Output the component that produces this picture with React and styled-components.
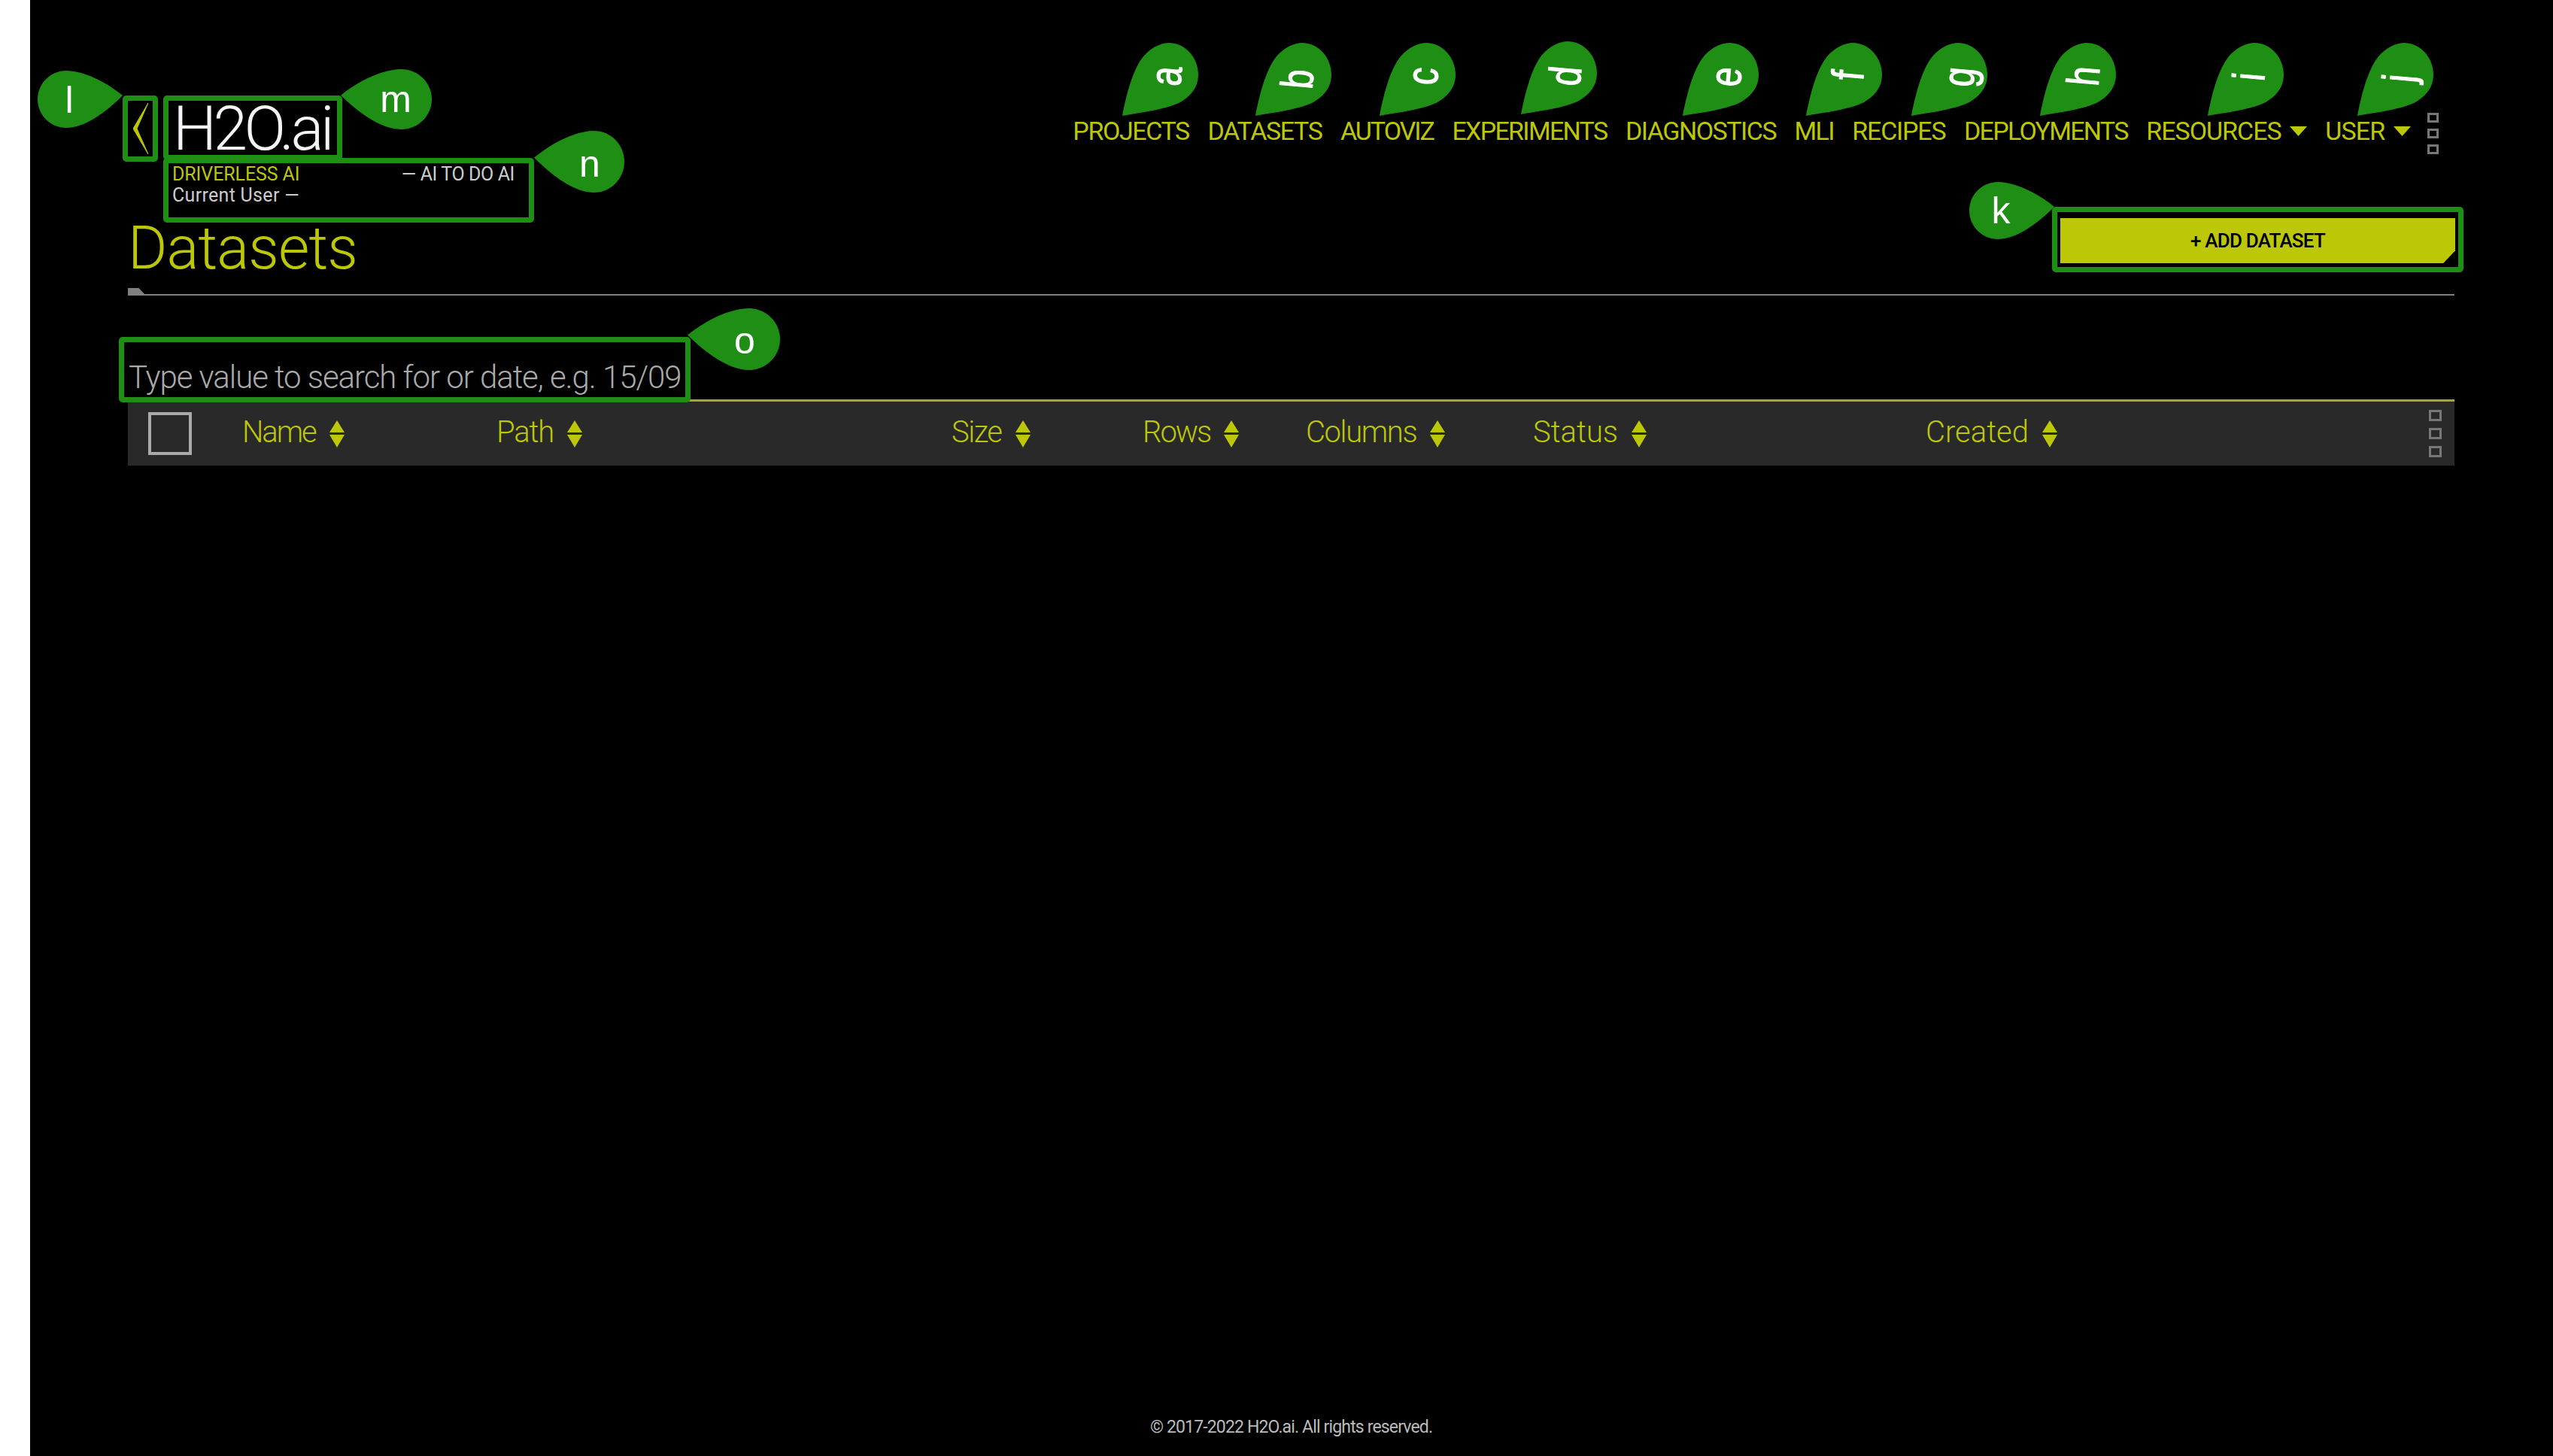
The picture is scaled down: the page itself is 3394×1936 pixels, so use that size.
import React from "react";
import styled, { createGlobalStyle } from "styled-components";

const lime = "#bcc707";
const green = "#1e8e14";
const face = `"Roboto", "Liberation Sans", sans-serif`;

const Global = createGlobalStyle`
  html, body { margin: 0; padding: 0; background: #fff; overflow: hidden; }
  body { font-family: ${face}; }
`;

// - - - - - - - - - - -
// page frame
const Page = styled.div`
  position: relative;
  width: 3394px;
  height: 1936px;
  padding-left: 40px;
  box-sizing: border-box;
  overflow: hidden;
`;

const Main = styled.main`
  display: flex;
  flex-direction: column;
  height: 100%;
  padding: 0 131px 0 130px;
  box-sizing: border-box;
  background: #000;
`;

// - - - - - - - - - - -
// top bar
const TopBar = styled.header`
  display: flex;
  justify-content: space-between;
  align-items: flex-start;
  height: 292px;
  padding-top: 127px;
  box-sizing: border-box;
`;

const Brand = styled.div`
  display: flex;
  gap: 7px;
  margin-left: -7px;
`;

const Marked = styled.div`
  border: 7px solid ${green};
  border-radius: 5px;
  box-sizing: border-box;
`;

const BackBox = styled(Marked)`
  display: flex;
  align-items: center;
  justify-content: center;
  width: 47px;
  height: 88px;
`;

const BrandColumn = styled.div`
  display: flex;
  flex-direction: column;
`;

const LogoBox = styled(Marked)`
  width: 238px;
  height: 86px;
  padding-left: 6px;
  color: #f4f4f4;
  font-size: 82px;
  font-weight: 300;
  line-height: 74px;
  letter-spacing: -4.5px;
  white-space: nowrap;
`;

const TagBox = styled(Marked)`
  width: 493px;
  height: 86px;
  margin-top: -3px;
  padding: 1px 0 0 5px;
  font-size: 25px;
  line-height: 28px;
  color: #ccc;
`;

const TagRow = styled.div`
  display: flex;
  justify-content: space-between;
  padding-right: 19px;
  white-space: nowrap;
  letter-spacing: 0.3px;
`;

const Product = styled.span`
  color: ${lime};
  letter-spacing: -0.1px;
`;

const Motto = styled.span`
  letter-spacing: -0.4px;
`;

const Nav = styled.nav`
  display: flex;
  align-items: flex-start;
  gap: 24.5px;
  margin-top: 23px;
  margin-right: 21px;
`;

const NavItem = styled.a`
  display: flex;
  align-items: center;
  gap: 11px;
  color: ${lime};
  font-size: 34px;
  line-height: 48px;
  white-space: nowrap;
  letter-spacing: ${(p) => p.$track}px;
`;

const NavDots = styled.div`
  margin-left: -2px;
`;

const Dots = styled.div`
  display: flex;
  flex-direction: column;
  gap: ${(p) => (p.$big ? 9 : 8)}px;
`;

const Dot = styled.i`
  display: block;
  width: ${(p) => (p.$big ? 17 : 15)}px;
  height: ${(p) => (p.$big ? 15 : 13)}px;
  border: 3px solid #777;
  box-sizing: border-box;
`;

// - - - - - - - - - - -
// title row
const TitleRow = styled.section`
  position: relative;
  display: flex;
  justify-content: space-between;
  align-items: flex-start;
  height: 118px;
  margin-top: -17px;
  border-bottom: 2px solid #808080;
  box-sizing: border-box;
  &::before {
    content: "";
    position: absolute;
    left: 0;
    bottom: -2px;
    width: 24px;
    height: 10px;
    background: #808080;
    clip-path: polygon(0 0, 60% 0, 100% 100%, 0 100%);
  }
`;

const Title = styled.h1`
  margin: 10px 0 0 0;
  color: ${lime};
  font-size: 80px;
  font-weight: 300;
  line-height: 90px;
  letter-spacing: -0.9px;
  white-space: nowrap;
`;

const ButtonBox = styled(Marked)`
  width: 547px;
  height: 87px;
  margin-right: -12px;
  padding: 8px 4px 5px;
`;

const AddButton = styled.button`
  display: block;
  width: 100%;
  height: 60px;
  padding: 0;
  border: 0;
  background: ${lime};
  color: #000;
  font-family: ${face};
  font-size: 26px;
  font-weight: 500;
  letter-spacing: -0.8px;
  clip-path: polygon(0 0, 100% 0, 100% 72%, 97% 100%, 0 100%);
`;

// - - - - - - - - - - -
// search and table head
const SearchBox = styled(Marked)`
  position: relative;
  z-index: 1;
  display: flex;
  align-items: flex-end;
  width: 760px;
  height: 87px;
  margin: 55px 0 0 -12px;
  padding: 0 0 1px 6px;
  color: #aaa;
  font-size: 42px;
  font-weight: 300;
  line-height: 50px;
  letter-spacing: -1.06px;
  white-space: nowrap;
`;

const TableHead = styled.div`
  display: flex;
  align-items: center;
  height: 88px;
  margin-top: -4px;
  padding-left: 27px;
  padding-right: 17px;
  border-top: 3px solid #a3a92a;
  background: #292929;
  box-sizing: border-box;
`;

const CheckBox = styled.div`
  flex: none;
  width: 58px;
  height: 57px;
  margin-right: 67px;
  border: 4px solid #aaa;
  box-sizing: border-box;
`;

const HeadCell = styled.div`
  display: flex;
  flex: none;
  align-items: center;
  gap: 18px;
  width: ${(p) => p.$width}px;
  padding-bottom: 4px;
  box-sizing: border-box;
  color: ${lime};
  font-size: 40px;
  font-weight: 300;
  line-height: 48px;
  letter-spacing: ${(p) => p.$track}px;
`;

const SortIcon = styled.svg`
  margin-top: 4px;
  fill: ${lime};
`;

const HeadEnd = styled.div`
  margin-left: auto;
`;

const Footer = styled.footer`
  margin-top: auto;
  padding-bottom: 24px;
  color: #bbb;
  font-size: 23px;
  line-height: 28px;
  letter-spacing: -0.85px;
  text-align: center;
`;

// - - - - - - - - - - -
// annotation pins
const PinWrap = styled.div`
  position: absolute;
  left: ${(p) => p.$x}px;
  top: ${(p) => p.$y}px;
  width: ${(p) => p.$w}px;
  height: ${(p) => p.$h}px;
`;

const PinShape = styled.svg`
  display: block;
  width: 100%;
  height: 100%;
  fill: ${green};
`;

const PinLetter = styled.span`
  position: absolute;
  left: ${(p) => p.$cx}px;
  top: ${(p) => p.$cy}px;
  color: #fff;
  font-family: "Liberation Sans", sans-serif;
  font-size: 50px;
  line-height: 50px;
  transform: translate(-50%, -50%) rotate(${(p) => p.$turn || 0}deg) scale(${(p) => p.$stretch || "1, 1"});
  -webkit-text-stroke: ${(p) => (p.$turn ? "1px #fff" : "0")};
`;

const PinTop = ({ x, y, letter, cx, cy }) => (
  <PinWrap $x={x} $y={y} $w={102} $h={98}>
    <PinShape viewBox="0 0 102 98">
      <path d="M0 97C5 70 14 35 28 18C38 6 52 0 62 0C84 0 101 20 101 42C101 60 90 72 75 80C52 90 20 93 0 97Z" />
    </PinShape>
    <PinLetter $cx={cx} $cy={cy} $turn={-85} $stretch="0.92, 1.2">{letter}</PinLetter>
  </PinWrap>
);

const PinSide = ({ x, y, w, h, letter, flip, cx, cy }) => (
  <PinWrap $x={x} $y={y} $w={w} $h={h}>
    <PinShape viewBox="0 0 113 76" preserveAspectRatio="none">
      <path
        transform={flip ? "translate(113 0) scale(-1 1)" : undefined}
        d="M113 33C90 14 60 0 38 0C17 0 0 17 0 38C0 59 17 76 38 76C62 76 90 56 113 33Z"
      />
    </PinShape>
    <PinLetter $cx={cx} $cy={cy}>{letter}</PinLetter>
  </PinWrap>
);

// - - - - - - - - - - -
// small drawings
const Back = () => (
  <svg width="20" height="68" viewBox="0 0 20 68">
    <path d="M20 0L5 34L20 68L0 34Z" fill={lime} stroke={lime} strokeWidth="1" strokeLinejoin="round" />
  </svg>
);

const Caret = () => (
  <svg width="23" height="13" viewBox="0 0 23 13">
    <path d="M0 0H23L11.5 13Z" fill={lime} />
  </svg>
);

const Sort = () => (
  <SortIcon width="20" height="36" viewBox="0 0 20 36">
    <path d="M10 0L20 16H0Z M0 19H20L10 36Z" />
  </SortIcon>
);

const navItems = [
  ["PROJECTS", -1.4],
  ["DATASETS", -1.4],
  ["AUTOVIZ", -2],
  ["EXPERIMENTS", -1.7],
  ["DIAGNOSTICS", -1.5],
  ["MLI", -1.7],
  ["RECIPES", -1.2],
  ["DEPLOYMENTS", -1.7],
  ["RESOURCES", -1, true],
  ["USER", -0.8, true],
];

const headCells = [
  ["Name", 338, -2.1],
  ["Path", 605, -1.2],
  ["Size", 254, -1.5],
  ["Rows", 217, -2],
  ["Columns", 302, -1.4],
  ["Status", 522, 0],
  ["Created", 400, 0],
];

const topPins = [
  [1492, 57, "a", 58, 44],
  [1669, 57, "b", 56, 48],
  [1834, 57, "c", 57, 44],
  [2022, 55, "d", 59, 46],
  [2237, 57, "e", 57, 45],
  [2401, 57, "f", 56, 43],
  [2541, 57, "g", 63, 45],
  [2712, 57, "h", 58, 44],
  [2935, 57, "i", 55, 45],
  [3134, 57, "j", 55, 47],
];

export default function App() {
  return (
    <Page>
      <Global />
      <Main>
        <TopBar>
          <Brand>
            <BackBox>
              <Back />
            </BackBox>
            <BrandColumn>
              <LogoBox>H2O.ai</LogoBox>
              <TagBox>
                <TagRow>
                  <Product>DRIVERLESS AI</Product>
                  <Motto>— AI TO DO AI</Motto>
                </TagRow>
                <TagRow>Current User —</TagRow>
              </TagBox>
            </BrandColumn>
          </Brand>
          <Nav>
            {navItems.map(([label, track, menu]) => (
              <NavItem key={label} $track={track}>
                {label}
                {menu && <Caret />}
              </NavItem>
            ))}
            <NavDots>
              <Dots>
                <Dot />
                <Dot />
                <Dot />
              </Dots>
            </NavDots>
          </Nav>
        </TopBar>

        <TitleRow>
          <Title>Datasets</Title>
          <ButtonBox>
            <AddButton>+ ADD DATASET</AddButton>
          </ButtonBox>
        </TitleRow>

        <SearchBox>Type value to search for or date, e.g. 15/09</SearchBox>

        <TableHead>
          <CheckBox />
          {headCells.map(([label, width, track]) => (
            <HeadCell key={label} $width={width} $track={track}>
              {label}
              <Sort />
            </HeadCell>
          ))}
          <HeadEnd>
            <Dots $big>
              <Dot $big />
              <Dot $big />
              <Dot $big />
            </Dots>
          </HeadEnd>
        </TableHead>

        <Footer>© 2017-2022 H2O.ai. All rights reserved.</Footer>
      </Main>

      {topPins.map(([x, y, letter, cx, cy]) => (
        <PinTop key={letter} x={x} y={y} letter={letter} cx={cx} cy={cy} />
      ))}
      <PinSide x={50} y={94} w={113} h={76} letter="l" cx={42} cy={39} />
      <PinSide x={453} y={92} w={121} h={80} letter="m" flip cx={73} cy={40} />
      <PinSide x={710} y={174} w={120} h={82} letter="n" flip cx={74} cy={44} />
      <PinSide x={2618} y={242} w={113} h={76} letter="k" cx={42} cy={38} />
      <PinSide x={914} y={410} w={123} h={82} letter="o" flip cx={76} cy={43} />
    </Page>
  );
}
